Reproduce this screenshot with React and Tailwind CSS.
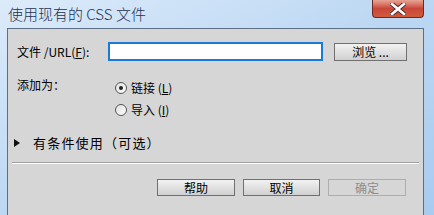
import React from "react";

const font = { fontFamily: '"Noto Sans CJK SC", "Liberation Sans", sans-serif' };

function Btn({ children, disabled, className = "" }) {
  return (
    <div
      className={
        "flex items-center justify-center h-[17px] text-[12px] leading-none border " +
        (disabled
          ? "border-[#adadad] text-[#8d8d8d] bg-[#d6d6d6]"
          : "border-[#707070] text-black bg-gradient-to-b from-[#f2f2f2] to-[#d0d0d0]") +
        " " +
        className
      }
    >
      {children}
    </div>
  );
}

function Radio({ checked }) {
  return (
    <div className="w-[12px] h-[12px] rounded-full border border-[#555] bg-gradient-to-br from-[#e0e0e0] to-white flex items-center justify-center">
      {checked && <div className="w-[4px] h-[4px] rounded-full bg-[#222]" />}
    </div>
  );
}

export default function App() {
  return (
    <div
      className="w-[434px] h-[215px] flex flex-col overflow-hidden bg-gradient-to-br from-[#dcebfa] via-[#bcd7f3] to-[#a8cbef]"
      style={font}
    >
      <div className="h-[28px] flex items-start shrink-0">
        <div className="pl-[8px] pt-[4px] text-[15px] font-light text-[#1e3250] leading-[20px] flex-1">
          使用现有的 CSS 文件
        </div>
        <div className="mr-[10px] w-[52px] h-[18px] rounded-b-[4px] border border-t-0 border-[#6b2a22] bg-gradient-to-b from-[#e6a495] via-[#c9473a] to-[#d05a3c] flex items-center justify-center">
          <svg width="16" height="12" viewBox="0 0 16 12">
            <path d="M2 1 L14 11 M14 1 L2 11" stroke="#4a2a2a" strokeWidth="4.5" strokeLinecap="square" />
            <path d="M2 1 L14 11 M14 1 L2 11" stroke="#ffffff" strokeWidth="2.6" strokeLinecap="square" />
          </svg>
        </div>
      </div>
      <div className="flex flex-1">
        <div className="w-[7px] shrink-0" />
        <div className="flex-1 border-l border-t border-[#5c6f85] bg-[#d6d6d6] text-[12px] text-black flex flex-col">
          <div className="flex items-center pt-[13px] pl-[9px]">
            <span className="w-[91px]">文件 /URL(<span className="underline">F</span>):</span>
            <div className="w-[215px] h-[19px] border-2 border-[#1a7ad6] bg-white" />
            <Btn className="ml-[11px] w-[73px] h-[18px]">浏览 ...</Btn>
          </div>
          <div className="flex pl-[9px] mt-[16px]">
            <span className="w-[98px] leading-[16px]">添加为：</span>
            <div className="flex flex-col gap-[6px] pt-[3px]">
              <div className="flex items-center gap-[4px] h-[16px]">
                <Radio checked />
                <span>链接 (<span className="underline">L</span>)</span>
              </div>
              <div className="flex items-center gap-[4px] h-[16px]">
                <Radio />
                <span>导入 (<span className="underline">I</span>)</span>
              </div>
            </div>
          </div>
          <div className="flex items-center pl-[6px] mt-[17px] h-[16px]">
            <svg width="6" height="8" viewBox="0 0 6 8" className="mr-[13px]">
              <path d="M0 0 L6 4 L0 8 Z" fill="#111" />
            </svg>
            <span className="text-[13px] tracking-[1.2px]">有条件使用（可选）</span>
          </div>
          <div className="mt-[11px] ml-[4px] mr-[4px] h-[2px] border-t border-[#a0a0a0] border-b border-b-white" />
          <div className="flex justify-end gap-[8px] pr-[17px] mt-[15px]">
            <Btn className="w-[78px]">帮助</Btn>
            <Btn className="w-[77px]">取消</Btn>
            <Btn className="w-[78px]" disabled>确定</Btn>
          </div>
        </div>
        <div className="w-[1px] bg-[#5c6f85]" />
        <div className="w-[10px] shrink-0" />
      </div>
    </div>
  );
}
